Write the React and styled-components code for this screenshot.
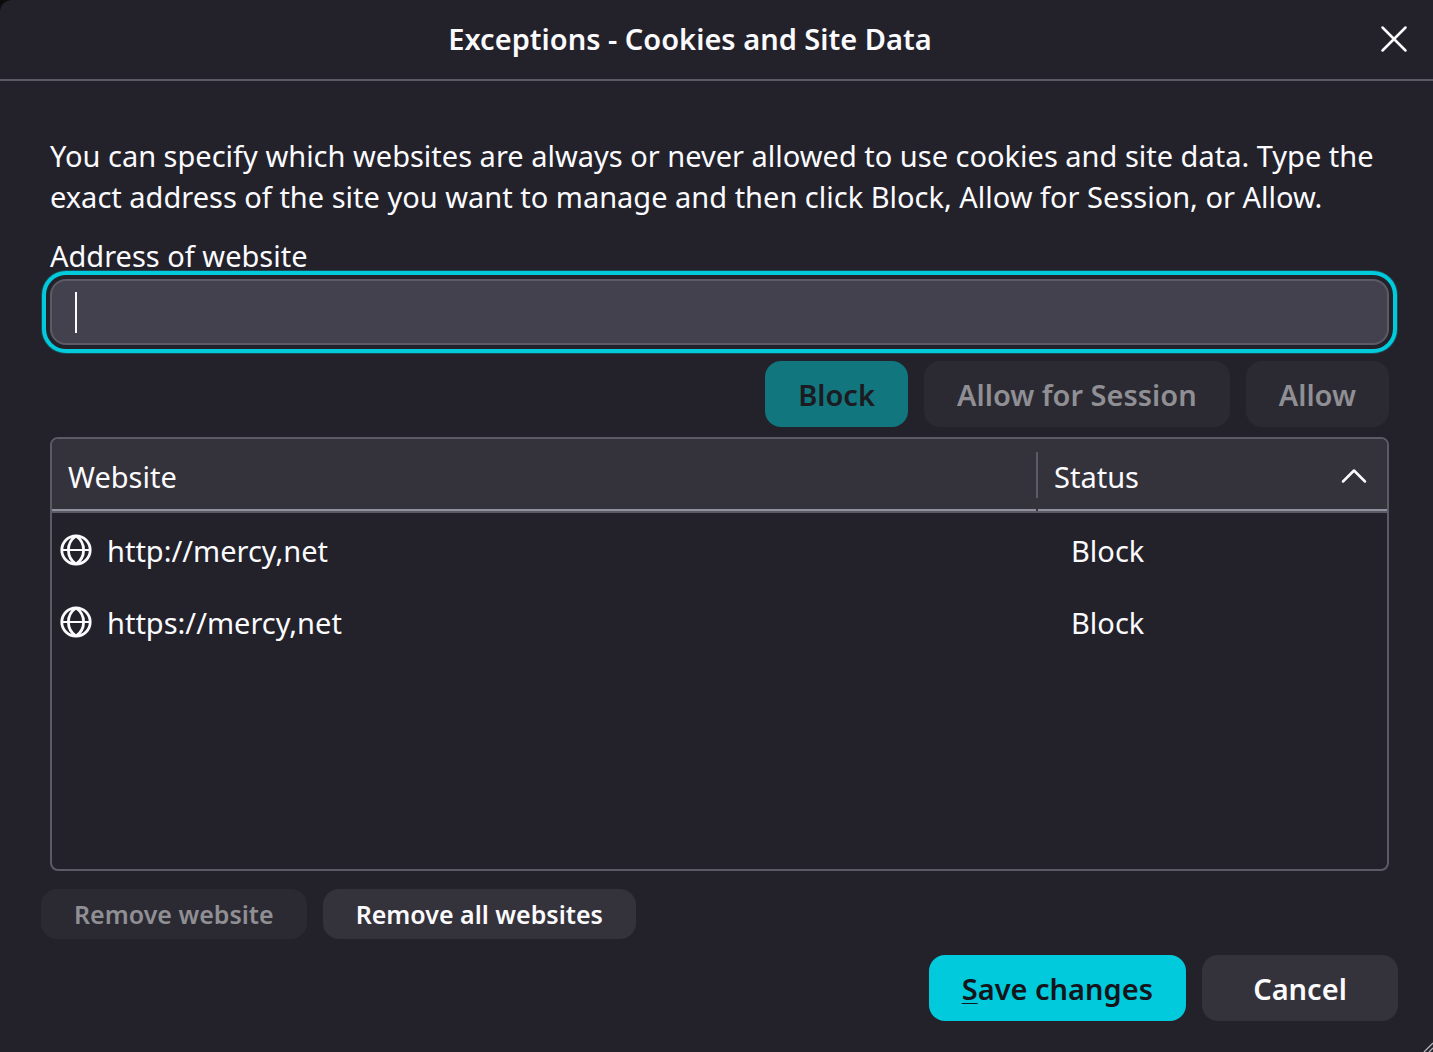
import React, { useState } from 'react'
import styled, { createGlobalStyle } from 'styled-components';

const sites = [
    { url: 'http://mercy,net', status: 'Block' },
    { url: 'https://mercy,net', status: 'Block' },
];

const GlobeIcon = () => (
    <svg width="32" height="32" viewBox="0 0 32 32" fill="none" stroke="#fbfbfe" strokeWidth="2.8" aria-hidden="true">
        <circle cx="16" cy="16" r="14.2" />
        <path d="M16 1.8c-5.2 3.6-7.6 8.6-7.6 14.2s2.4 10.600 7.600 14.200M16 1.800c5.200 3.600 7.600 8.600 7.600 14.200s-2.400 10.600-7.600 14.200" />
        <path d="M2 16h28" strokeWidth="2" />
    </svg>
)

const App = () => {
    const [address, setAddress] = useState('');

    return (
        <>
            <GlobalStyle />
            <Dialog role="dialog" aria-labelledby="dialog-title">
                <TitleBar>
                    <Title id="dialog-title">Exceptions - Cookies and Site Data</Title>
                    <CloseButton type="button" aria-label="Close">
                        <svg width="28" height="28" viewBox="0 0 28 28" fill="none" stroke="#fbfbfe" strokeWidth="2.5" strokeLinecap="round">
                            <path d="M2.5 2.5l23 23M25.5 2.5l-23 23" />
                        </svg>
                    </CloseButton>
                </TitleBar>
                <Content>
                    <Description>
                        You can specify which websites are always or never allowed to use cookies and site data. Type the exact address of the site you want to manage and then click Block, Allow for Session, or Allow.
                    </Description>
                    <Label htmlFor="address">Address of website</Label>
                    <AddressField>
                        <AddressInput
                            id="address"
                            type="text"
                            autoFocus
                            value={address}
                            onChange={(e) => setAddress(e.target.value)}
                        />
                        {!address && <Caret />}
                    </AddressField>
                    <ActionRow>
                        <Button type="button" $primary disabled={!address}>Block</Button>
                        <Button type="button" disabled={!address}>Allow for Session</Button>
                        <Button type="button" disabled={!address}>Allow</Button>
                    </ActionRow>
                    <TableBox>
                        <Table>
                            <thead>
                                <tr>
                                    <HeadCell>
                                        <HeadInner>
                                            <SortButton type="button">Website</SortButton>
                                        </HeadInner>
                                    </HeadCell>
                                    <HeadCell $narrow aria-sort="ascending">
                                        <HeadInner>
                                            <Divider />
                                            <SortButton type="button">
                                                Status
                                                <svg width="26" height="16" viewBox="0 0 26 16" fill="none" stroke="#fbfbfe" strokeWidth="2.5" strokeLinecap="round" strokeLinejoin="round" aria-hidden="true">
                                                    <path d="M2 13.5L13 2.5l11 11" />
                                                </svg>
                                            </SortButton>
                                        </HeadInner>
                                    </HeadCell>
                                </tr>
                            </thead>
                            <tbody>
                                {sites.map((site) => (
                                    <tr key={site.url}>
                                        <Cell>
                                            <SiteName>
                                                <GlobeIcon />
                                                <span>{site.url}</span>
                                            </SiteName>
                                        </Cell>
                                        <StatusCell>{site.status}</StatusCell>
                                    </tr>
                                ))}
                            </tbody>
                        </Table>
                    </TableBox>
                    <RemoveRow>
                        <SmallButton type="button" disabled>Remove website</SmallButton>
                        <SmallButton type="button">Remove all websites</SmallButton>
                    </RemoveRow>
                    <FooterRow>
                        <Button type="button" $primary><AccessKey>S</AccessKey>ave changes</Button>
                        <CancelButton type="button">Cancel</CancelButton>
                    </FooterRow>
                </Content>
                <Resizer width="10" height="10" viewBox="0 0 10 10" stroke="#b0b0b5" strokeWidth="1.4" aria-hidden="true">
                    <path d="M1 10l9-9M6 10l4-4" />
                </Resizer>
            </Dialog>
        </>
    )
}


const GlobalStyle = createGlobalStyle`
    * {
        box-sizing: border-box;
    }
    body {
        margin: 0;
        background: #0c0c0d;
        color: #fbfbfe;
        font-family: "Segoe UI", "Noto Sans", "Open Sans", sans-serif;
        font-size: 29px;
        line-height: 41px;
    }
    button, input {
        font: inherit;
        color: inherit;
    }
`;

const Dialog = styled.div`
    position: relative;
    display: flex;
    flex-direction: column;
    min-height: 100vh;
    border-top-left-radius: 12px;
    background: #23222b;
`;

const TitleBar = styled.header`
    display: flex;
    align-items: center;
    height: 81px;
    padding: 0 17px 2px 8px;
    border-bottom: 2px solid #5b5b66;
`;

const Title = styled.h1`
    flex: 1;
    margin: 0;
    font-size: 29px;
    font-weight: 600;
    text-align: center;
`;

const CloseButton = styled.button`
    display: flex;
    padding: 8px;
    border: none;
    background: none;
`;

const Content = styled.main`
    flex: 1;
    display: flex;
    flex-direction: column;
    padding: 54px 44px 31px 50px;
`;

const Description = styled.p`
    margin: 0 0 18px;
`;

const Label = styled.label`
    margin-bottom: 3px;
`;

const AddressField = styled.div`
    position: relative;
`;

const AddressInput = styled.input`
    display: block;
    width: 100%;
    height: 66px;
    padding: 0 24px;
    border: 2px solid #5b5b66;
    border-radius: 16px;
    background: #42414d;
    caret-color: transparent;
    outline: 4px solid #00cadb;
    outline-offset: 4px;
    box-shadow: 0 0 0 4px #23222b, 0 0 0 9px rgba(0, 202, 219, 0.25);
`;

const Caret = styled.span`
    position: absolute;
    top: 13px;
    left: 25px;
    width: 2px;
    height: 41px;
    background: #fbfbfe;
    pointer-events: none;
`;

const Button = styled.button`
    height: 66px;
    padding: 0 33px;
    border: none;
    border-radius: 16px;
    background: ${(props) => (props.$primary ? '#00cadb' : '#34323b')};
    color: ${(props) => (props.$primary ? '#15141a' : '#fbfbfe')};
    font-weight: 600;

    &:disabled {
        background: ${(props) => (props.$primary ? '#12767f' : '#2b2a33')};
        color: ${(props) => (props.$primary ? '#1c1b22' : '#8f8f94')};
    }
`;

const CancelButton = styled(Button)`
    min-width: 196px;
`;

const SmallButton = styled(Button)`
    height: 50px;
    font-size: 25px;
`;

const ActionRow = styled.div`
    display: flex;
    justify-content: flex-end;
    gap: 16px;
    margin: 16px 0 10px;
`;

const TableBox = styled.div`
    flex: 1;
    overflow: hidden;
    border: 2px solid #5b5b66;
    border-radius: 8px;
`;

const Table = styled.table`
    width: 100%;
    table-layout: fixed;
    border-spacing: 0;
`;

const HeadCell = styled.th`
    width: ${(props) => (props.$narrow ? '351px' : 'auto')};
    padding: 0;
    border-bottom: 2px solid #5b5b66;
    background: #34323b;
    font-weight: 400;
`;

const HeadInner = styled.div`
    display: flex;
    height: 72px;
`;

const Divider = styled.span`
    width: 2px;
    height: 46px;
    margin-top: 13px;
    background: #5b5b66;
`;

const SortButton = styled.button`
    flex: 1;
    display: flex;
    align-items: center;
    justify-content: space-between;
    padding: 4px 20px 0 16px;
    border: none;
    border-bottom: 2px solid #8f8f9d;
    background: none;
`;

const Cell = styled.td`
    height: 72px;
    padding: 2px 8px 0;
`;

const StatusCell = styled(Cell)`
    padding-left: 35px;
`;

const SiteName = styled.div`
    display: flex;
    align-items: center;
    gap: 15px;
`;

const RemoveRow = styled.div`
    display: flex;
    gap: 16px;
    margin: 18px 0 16px -9px;
`;

const FooterRow = styled.div`
    display: flex;
    justify-content: flex-end;
    gap: 16px;
    margin-right: -9px;
`;

const AccessKey = styled.span`
    text-decoration: underline;
    text-decoration-thickness: 1px;
    text-underline-offset: 3px;
`;

const Resizer = styled.svg`
    position: absolute;
    right: 0;
    bottom: 0;
`;

export default App;
